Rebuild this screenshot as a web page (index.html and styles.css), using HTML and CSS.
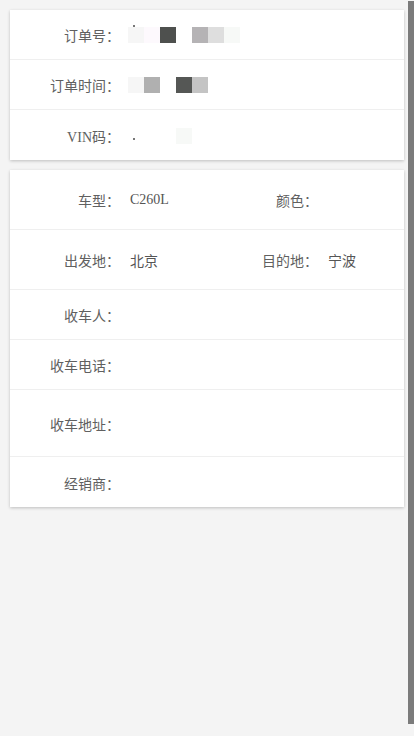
FILE: index.html
```html
<!DOCTYPE html>
<html lang="zh">
<head>
<meta charset="utf-8">
<link rel="stylesheet" href="styles.css">
</head>
<body>
<div class="page">
  <div class="card">
    <div class="row h50">
      <span class="label">订单号：</span>
      <span class="value mosaic">
        <i class="m c1"></i><i class="m c2"></i><i class="m c3"></i><i class="m"></i><i class="m c4"></i><i class="m c5"></i><i class="m c6"></i>
        <b class="tick t-top"></b>
      </span>
    </div>
    <div class="row h50">
      <span class="label">订单时间：</span>
      <span class="value mosaic">
        <i class="m c1"></i><i class="m c7"></i><i class="m"></i><i class="m c8"></i><i class="m c9"></i>
      </span>
    </div>
    <div class="row h50 last">
      <span class="label">VIN码：</span>
      <span class="value mosaic">
        <i class="m"></i><i class="m"></i><i class="m"></i><i class="m c6"></i>
        <b class="tick t-bot"></b>
      </span>
    </div>
  </div>

  <div class="card">
    <div class="row h60">
      <div class="half"><span class="label">车型：</span><span class="value">C260L</span></div>
      <div class="half"><span class="label">颜色：</span><span class="value"></span></div>
    </div>
    <div class="row h60">
      <div class="half"><span class="label">出发地：</span><span class="value">北京</span></div>
      <div class="half"><span class="label">目的地：</span><span class="value">宁波</span></div>
    </div>
    <div class="row h50">
      <span class="label">收车人：</span><span class="value"></span>
    </div>
    <div class="row h50">
      <span class="label">收车电话：</span><span class="value"></span>
    </div>
    <div class="row h67">
      <span class="label">收车地址：</span><span class="value"></span>
    </div>
    <div class="row h50 last">
      <span class="label">经销商：</span><span class="value"></span>
    </div>
  </div>
</div>
<div class="scrollbar"></div>
</body>
</html>
```

FILE: styles.css
```css
html, body {
  margin: 0;
  padding: 0;
  background: #f4f4f4;
  height: 100%;
  overflow: hidden;
}
body {
  font-family: "Liberation Serif", "Noto Sans CJK SC", serif;
  font-size: 14px;
  color: #555;
}
.page {
  padding: 10px 10px 0 10px;
  width: 394px;
  display: flex;
  flex-direction: column;
  gap: 10px;
}
.card {
  background: #fff;
  box-shadow: 0 1px 3px rgba(0, 0, 0, 0.22);
  display: flex;
  flex-direction: column;
}
.row {
  display: flex;
  align-items: center;
  border-bottom: 1px solid #efefef;
  box-sizing: border-box;
  padding-top: 1px;
}
.row.last {
  border-bottom: none;
}
.h50 { height: 50px; }
.h60 { height: 60px; }
.h67 { height: 67px; }
.half {
  flex: 1;
  display: flex;
  align-items: center;
}
.label {
  width: 110px;
  flex: none;
  text-align: right;
  color: #606060;
  margin-right: 10px;
  font-family: "Liberation Serif", "Noto Sans CJK SC", serif;
}
.half + .half .label {
  width: 111px;
}
.value {
  color: #555;
  font-family: "Liberation Serif", "Noto Sans CJK SC", serif;
}
.mosaic {
  display: flex;
  margin-left: -2px;
  position: relative;
  height: 16px;
}
.m {
  width: 16px;
  height: 16px;
  display: block;
}
.c1 { background: #f6f6f6; }
.c2 { background: #fdf9fd; }
.c3 { background: #4e504e; }
.c4 { background: #b5b3b5; }
.c5 { background: #dedede; }
.c6 { background: #f7f9f7; }
.c7 { background: #b0b0b0; }
.c8 { background: #555755; }
.c9 { background: #c4c4c4; }
.tick {
  position: absolute;
  width: 2px;
  height: 2px;
  background: #777;
  left: 5px;
}
.t-top { top: -2px; }
.t-bot { top: 10px; }
.scrollbar {
  position: fixed;
  right: 0;
  top: 1px;
  width: 6px;
  height: 723px;
  background: #7b7b7b;
}
```
